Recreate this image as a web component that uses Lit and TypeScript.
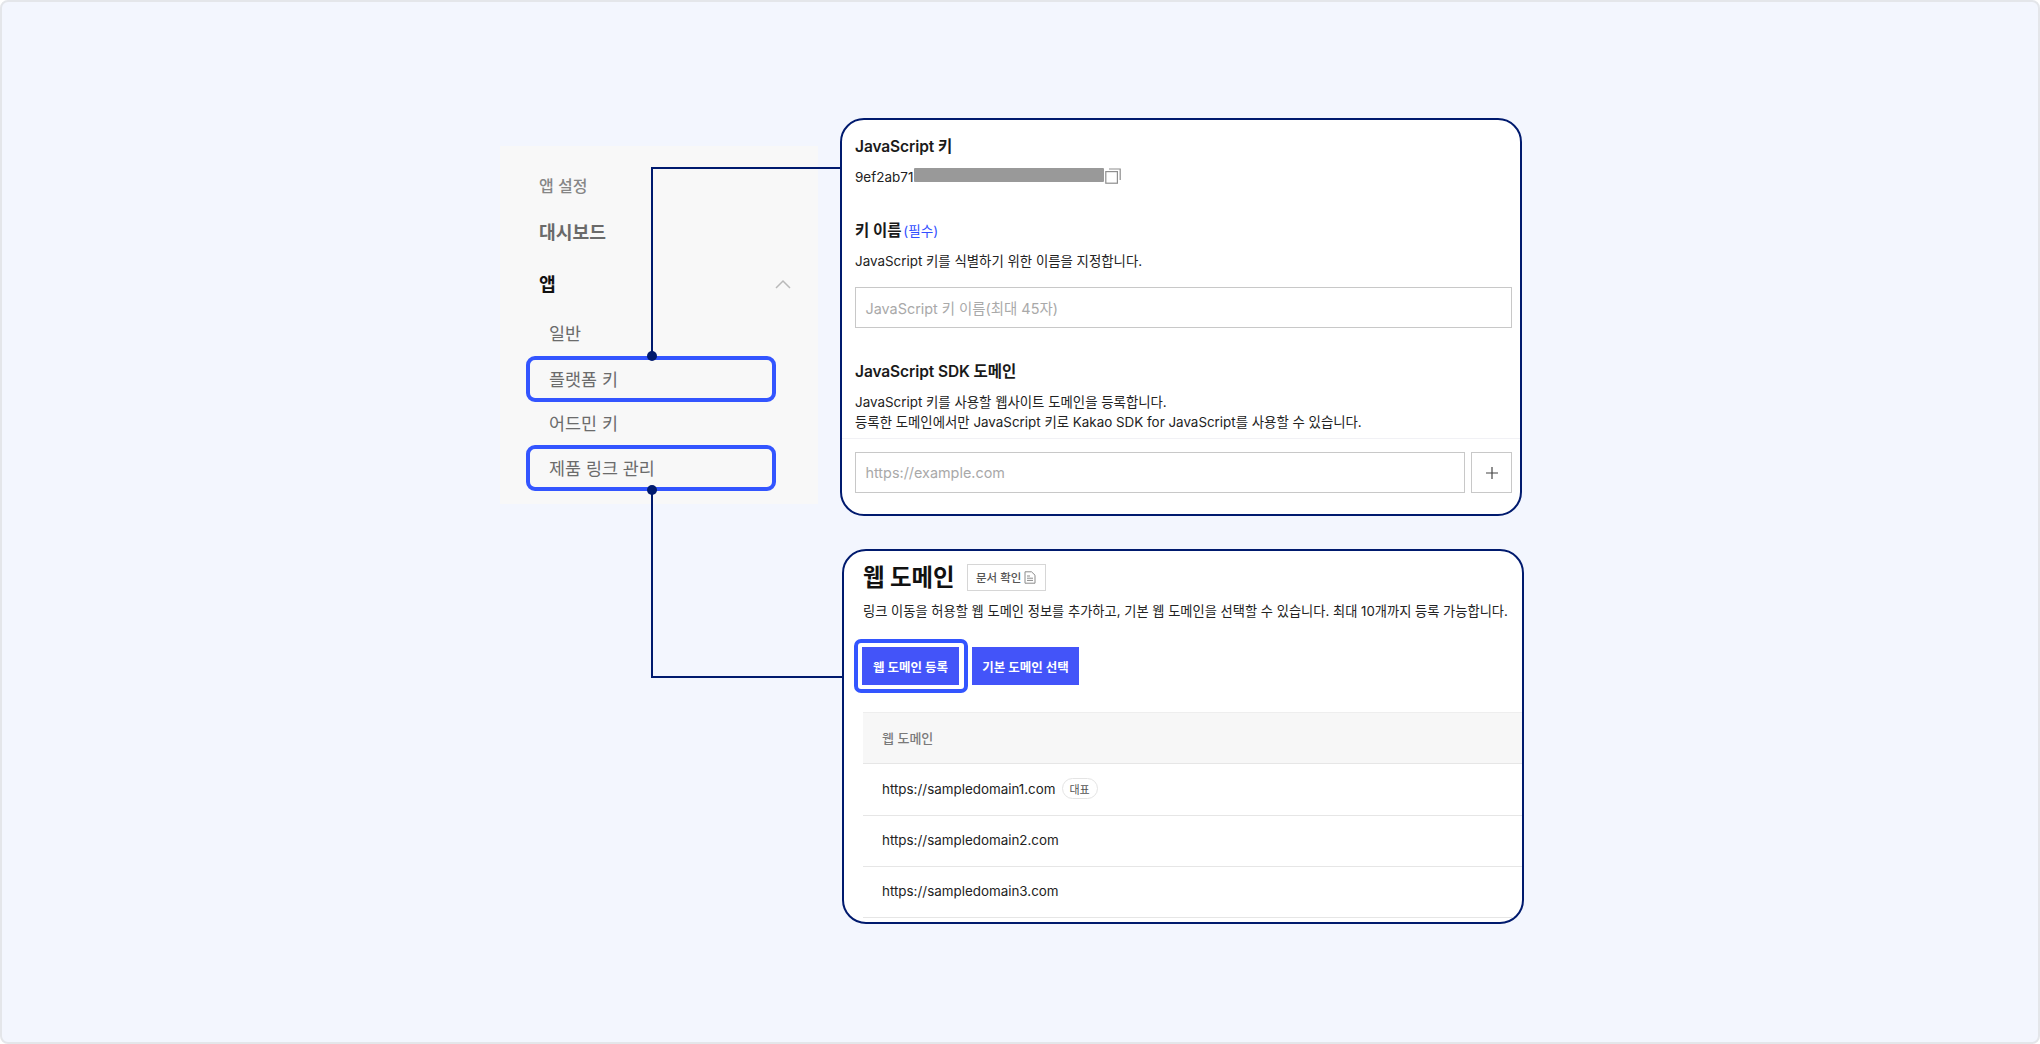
import { LitElement, html, css } from "lit";
import { customElement } from "lit/decorators.js";

@customElement("app-root")
export class AppRoot extends LitElement {
  static styles = css`
    :host {
      display: block;
      width: 2040px;
      height: 1044px;
      font-family: Inter, "Noto Sans CJK KR", sans-serif;
      color: #1e1e1e;
    }
    * { box-sizing: border-box; }
    .page {
      position: relative;
      width: 2040px;
      height: 1044px;
      background: #f3f6fe;
      border: 2px solid #e4e6ea;
      border-radius: 8px;
      display: flex;
      align-items: flex-start;
      padding: 116px 0 0 498px;
      overflow: hidden;
    }
    .side {
      width: 318px;
      height: 358px;
      margin-top: 28px;
      background: #f8f8f8;
      padding: 27px 0 0 26px;
      display: flex;
      flex-direction: column;
    }
    .side-label {
      padding-left: 13px;
      height: 26px;
      line-height: 26px;
      font-size: 16px;
      font-weight: 500;
      color: #868686;
    }
    .side-head {
      padding-left: 13px;
      font-size: 18.2px;
      font-weight: 700;
      line-height: 26px;
      height: 26px;
      margin-top: 20px;
      color: #6a6a6a;
    }
    .side-app {
      display: flex;
      justify-content: space-between;
      align-items: center;
      width: 265px;
      margin-top: 26px;
      color: #111;
    }
    .side-app svg { display: block; }
    .sub {
      width: 250px;
      height: 46px;
      padding: 0 0 2px 19px;
      display: flex;
      align-items: center;
      font-size: 17.4px;
      color: #6b6b6b;
      border: 4px solid transparent;
      border-radius: 9px;
    }
    .subs { margin-top: 13px; display: flex; flex-direction: column; }
    .sub.short { height: 43px; }
    .sub.hl { border-color: #3355ff; }
    .cards {
      margin-left: 22px;
      display: flex;
      flex-direction: column;
      gap: 33px;
    }
    .card {
      background: #fff;
      border: 2px solid #001a6e;
      border-radius: 24px;
      overflow: hidden;
      position: relative;
      z-index: 2;
    }
    .c1 {
      width: 682px;
      height: 398px;
      padding: 0 8px 0 13px;
    }
    .c2 {
      width: 682px;
      height: 375px;
      margin-left: 2px;
      padding: 0 0 0 19px;
    }
    h3 {
      margin: 0;
      font-size: 15.5px;
      font-weight: 600;
      line-height: 22px;
      color: #1a1a1a;
      letter-spacing: -0.1px;
    }
    .t1 { margin-top: 16px; }
    .keyrow {
      margin-top: 10px;
      height: 18px;
      display: flex;
      align-items: flex-start;
      font-size: 13.5px;
      line-height: 18px;
      color: #222;
    }
    .keytext { display: block; width: 59px; }
    .mask {
      display: block;
      width: 190px;
      height: 14px;
      background: #999;
      border-radius: 1px;
    }
    .keyrow svg { display: block; margin-left: 1px; }
    .t2 { margin-top: 34px; display: flex; align-items: center; gap: 2px; }
    .req { font-size: 13.6px; font-weight: 400; color: #3350ff; letter-spacing: 0; }
    .desc {
      margin: 9px 0 0;
      font-size: 13.4px;
      line-height: 20px;
      color: #222;
    }
    .input {
      height: 41px;
      border: 1px solid #c8c8c8;
      display: flex;
      align-items: center;
      padding-left: 9.5px;
      font-size: 14.4px;
      color: #a9a9a9;
      background: #fff;
    }
    .i1 { margin-top: 16px; }
    .t3 { margin-top: 33px; }
    .foot {
      margin: 6px -8px 0 -13px;
      padding: 14px 8px 0 13px;
      position: relative;
      display: flex;
      gap: 6px;
    }
    .foot::before {
      content: "";
      position: absolute;
      left: 0;
      right: 0;
      top: 0;
      height: 1px;
      background: #f1f1f5;
    }
    .foot .input { flex: 1; }
    .plus {
      width: 41px;
      height: 41px;
      border: 1px solid #c8c8c8;
      display: flex;
      align-items: center;
      justify-content: center;
    }
    .titlerow {
      display: flex;
      align-items: center;
      margin-top: 13px;
      height: 27px;
    }
    h2 {
      margin: 0;
      font-size: 23.4px;
      font-weight: 700;
      line-height: 27px;
      color: #111;
    }
    .doc {
      margin-left: 12px;
      width: 79px;
      height: 27px;
      padding-bottom: 1px;
      border: 1px solid #d6d6d6;
      display: flex;
      align-items: center;
      justify-content: center;
      gap: 3px;
      font-size: 11.5px;
      color: #555;
      font-weight: 500;
    }
    .c2 .desc { margin: 10px 0 0; font-size: 13.24px; }
    .btns {
      margin-top: 26px;
      display: flex;
      gap: 13px;
      align-items: center;
      height: 38px;
    }
    .btn {
      height: 38px;
      background: #4354f9;
      color: #fff;
      font-size: 12.5px;
      font-weight: 700;
      display: flex;
      align-items: center;
      justify-content: center;
      position: relative;
    }
    .b1 { width: 97px; margin-left: -1px; }
    .b2 { width: 107px; }
    .b1::after {
      content: "";
      position: absolute;
      inset: -8px -9px -8px -8px;
      border: 4px solid #3355ff;
      border-radius: 7px;
    }
    .table { margin-top: 27px; font-size: 13.4px; }
    .tr {
      height: 52px;
      border-bottom: 1px solid #e6e6e6;
      padding: 0 0 2px 19px;
      display: flex;
      align-items: center;
      color: #222;
    }
    .tr.low { height: 51px; }
    .tr.th {
      background: #f7f7f7;
      color: #7a7a7a;
      font-size: 13px;
      font-weight: 500;
      border-top: 1px solid #eeeeee;
    }
    .badge {
      margin-left: 6px;
      width: 36px;
      height: 21px;
      border: 1px solid #e4e4e4;
      border-radius: 11px;
      display: flex;
      align-items: center;
      justify-content: center;
      font-size: 11px;
      color: #555;
    }
    .wires {
      position: absolute;
      left: -2px;
      top: -2px;
      z-index: 3;
      pointer-events: none;
    }
  `;

  render() {
    return html`
      <div class="page">
        <nav class="side">
          <div class="side-label">앱 설정</div>
          <div class="side-head">대시보드</div>
          <div class="side-head side-app">
            <span>앱</span>
            <svg width="16" height="10" viewBox="0 0 16 10" fill="none">
              <path d="M1 9L8 2L15 9" stroke="#b9b9b9" stroke-width="1.5" />
            </svg>
          </div>
          <div class="subs">
            <div class="sub">일반</div>
            <div class="sub hl">플랫폼 키</div>
            <div class="sub short">어드민 키</div>
            <div class="sub hl">제품 링크 관리</div>
          </div>
        </nav>
        <div class="cards">
          <section class="card c1">
            <h3 class="t1">JavaScript 키</h3>
            <div class="keyrow">
              <span class="keytext">9ef2ab71</span><span class="mask"></span>
              <svg width="16" height="16" viewBox="0 0 16 16" fill="none" stroke="#8e8e8e" stroke-width="1.2">
                <rect x="0.8" y="3.6" width="11.6" height="11.6" />
                <path d="M4 1H15.2V12" />
              </svg>
            </div>
            <h3 class="t2">키 이름<span class="req">(필수)</span></h3>
            <p class="desc">JavaScript 키를 식별하기 위한 이름을 지정합니다.</p>
            <div class="input i1">JavaScript 키 이름(최대 45자)</div>
            <h3 class="t3">JavaScript SDK 도메인</h3>
            <p class="desc">JavaScript 키를 사용할 웹사이트 도메인을 등록합니다.<br />등록한 도메인에서만 JavaScript 키로 Kakao SDK for JavaScript를 사용할 수 있습니다.</p>
            <div class="foot">
              <div class="input">https://example.com</div>
              <div class="plus">
                <svg width="12" height="12" viewBox="0 0 12 12" stroke="#444" stroke-width="1.2">
                  <path d="M6 0V12M0 6H12" />
                </svg>
              </div>
            </div>
          </section>
          <section class="card c2">
            <div class="titlerow">
              <h2>웹 도메인</h2>
              <div class="doc">
                문서 확인
                <svg width="12" height="13" viewBox="0 0 12 13" fill="none" stroke="#8a8a8a" stroke-width="1">
                  <path d="M1 .8H7.5L11 4.2V12.2H1Z" />
                  <path d="M3 5H6M3 7.2H9M3 9.4H9" />
                </svg>
              </div>
            </div>
            <p class="desc">링크 이동을 허용할 웹 도메인 정보를 추가하고, 기본 웹 도메인을 선택할 수 있습니다. 최대 10개까지 등록 가능합니다.</p>
            <div class="btns">
              <div class="btn b1">웹 도메인 등록</div>
              <div class="btn b2">기본 도메인 선택</div>
            </div>
            <div class="table">
              <div class="tr th">웹 도메인</div>
              <div class="tr">https://sampledomain1.com<span class="badge">대표</span></div>
              <div class="tr low">https://sampledomain2.com</div>
              <div class="tr low">https://sampledomain3.com</div>
            </div>
          </section>
        </div>
        <svg class="wires" width="2040" height="1044" viewBox="0 0 2040 1044" fill="none">
          <path d="M652 356V168H840" stroke="#001a6e" stroke-width="2" />
          <path d="M652 490V677H842" stroke="#001a6e" stroke-width="2" />
          <circle cx="652" cy="356" r="5" fill="#001a6e" />
          <circle cx="652" cy="490" r="5" fill="#001a6e" />
        </svg>
      </div>
    `;
  }
}
